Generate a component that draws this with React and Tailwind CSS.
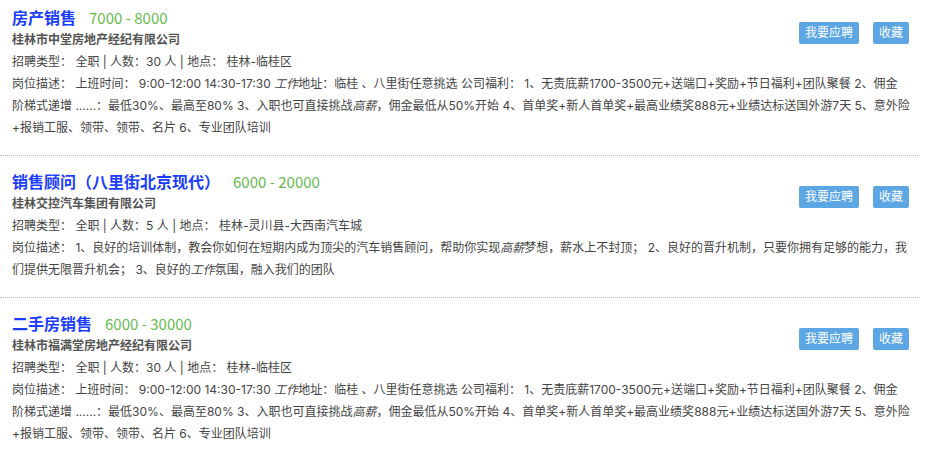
import React from "react";

const font = { fontFamily: 'Inter, "Noto Sans CJK SC", sans-serif' };
const cjk = { fontFamily: '"Noto Sans CJK SC", sans-serif' };

function Buttons() {
  return (
    <div className="float-right mt-[15px] flex gap-[14px]">
      <button className="h-[22px] rounded-[2px] bg-[#5da6e4] px-[6px] text-[12px] leading-[22px] text-white">我要应聘</button>
      <button className="h-[22px] rounded-[2px] bg-[#5da6e4] px-[6px] text-[12px] leading-[22px] text-white">收藏</button>
    </div>
  );
}

function Card({ first, title, salary, company, info, desc }) {
  return (
    <div className={"w-[920px] border-b border-dotted border-[#bbb] pl-[12px] pr-[11px] pb-[16px] " + (first ? "pt-[7px]" : "pt-[15px]")}>
      <Buttons />
      <div className="flex items-center h-[22px] leading-[22px]">
        <span className="text-[16px] font-bold text-[#1a3dff]">{title}</span>
        <span className="ml-[13px] text-[15px] text-[#66b94e]" style={cjk}>{salary}</span>
      </div>
      <div className="text-[12px] leading-[22px] font-bold text-[#555]">{company}</div>
      <div className="text-[12px] leading-[22px] text-[#444]">{info}</div>
      <div className="text-[12px] leading-[22px] text-[#444]">
        {desc.map((line, i) => (
          <div key={i} className="whitespace-nowrap">{line}</div>
        ))}
      </div>
    </div>
  );
}

const descA = [
  <>岗位描述： 上班时间： 9:00-12:00 14:30-17:30 <i>工作</i>地址：临桂 、八里街任意挑选 公司福利： 1、无责底薪1700-3500元+送端口+奖励+节日福利+团队聚餐 2、佣金</>,
  <>阶梯式递增 ......：最低30%、最高至80% 3、入职也可直接挑战<i>高薪</i>，佣金最低从50%开始 4、首单奖+新人首单奖+最高业绩奖888元+业绩达标送国外游7天 5、意外险</>,
  <>+报销工服、领带、领带、名片 6、专业团队培训</>,
];

const descB = [
  <>岗位描述： 1、良好的培训体制，教会你如何在短期内成为顶尖的汽车销售顾问，帮助你实现<i>高薪</i>梦想，薪水上不封顶； 2、良好的晋升机制，只要你拥有足够的能力，我</>,
  <>们提供无限晋升机会； 3、良好的<i>工作</i>氛围，融入我们的团队</>,
];

export default function App() {
  return (
    <div className="w-[927px] h-[456px] overflow-hidden bg-white" style={font}>
      <Card
        first
        title="房产销售"
        salary="7000 - 8000"
        company="桂林市中堂房地产经纪有限公司"
        info="招聘类型： 全职 | 人数：30 人 | 地点： 桂林-临桂区"
        desc={descA}
      />
      <Card
        title="销售顾问（八里街北京现代）"
        salary="6000 - 20000"
        company="桂林交控汽车集团有限公司"
        info="招聘类型： 全职 | 人数：5 人 | 地点： 桂林-灵川县-大西南汽车城"
        desc={descB}
      />
      <Card
        title="二手房销售"
        salary="6000 - 30000"
        company="桂林市福满堂房地产经纪有限公司"
        info="招聘类型： 全职 | 人数：30 人 | 地点： 桂林-临桂区"
        desc={descA}
      />
    </div>
  );
}
